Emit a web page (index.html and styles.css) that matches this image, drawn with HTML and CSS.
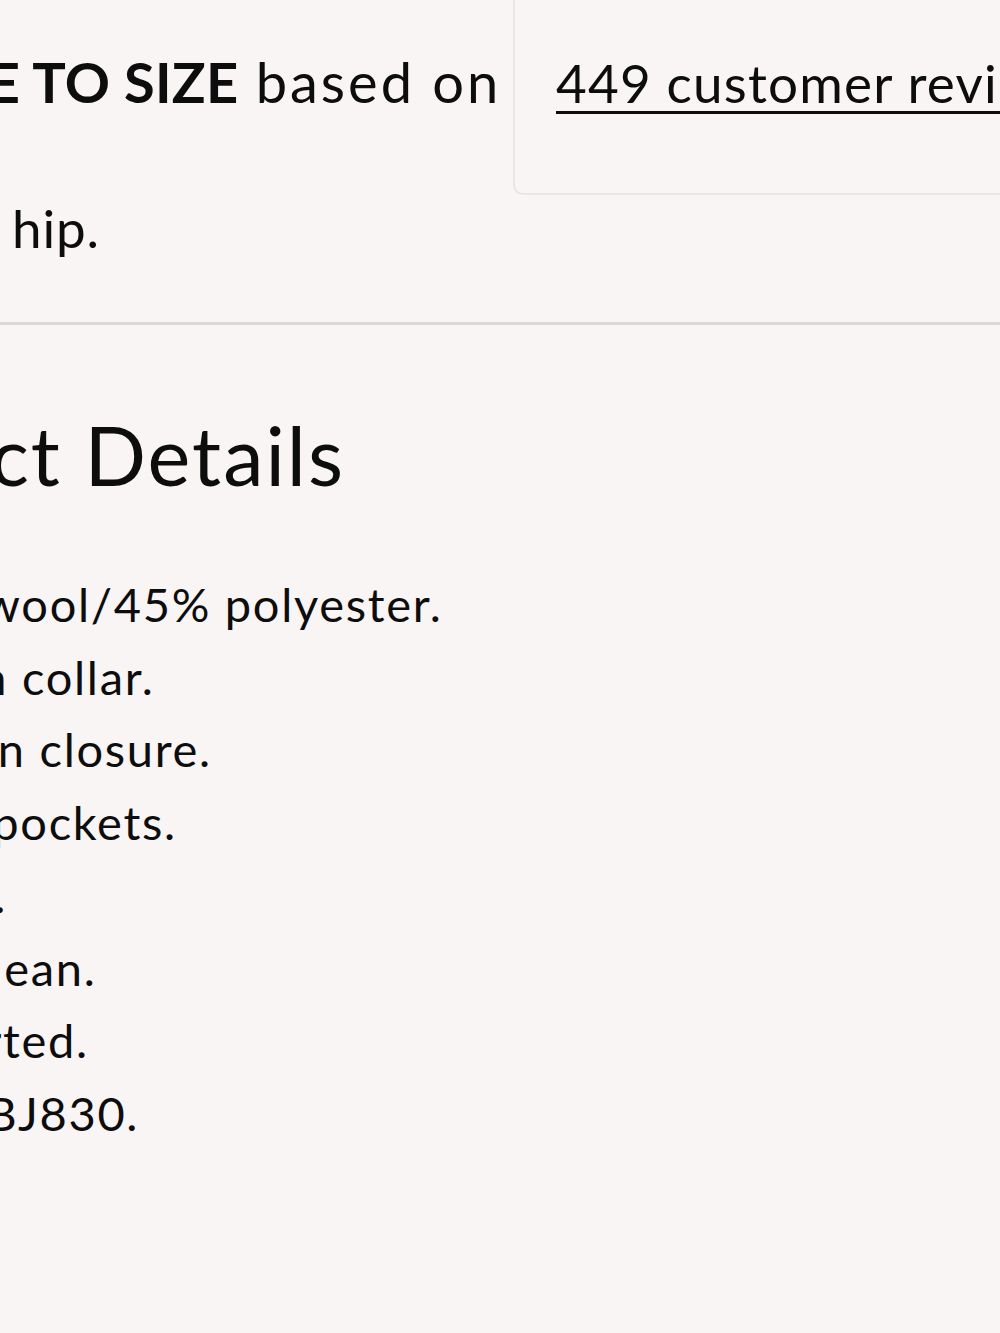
FILE: index.html
```html
<!DOCTYPE html>
<html lang="en">
<head>
<meta charset="utf-8">
<title>Product Details</title>
<link rel="stylesheet" href="styles.css">
</head>
<body>
<main class="page">
  <section class="fit">
    <div class="fit-row">
      <p class="fit-text">Fit: <strong>TRUE TO SIZE</strong> based on</p>
      <div class="review-box">
        <a class="review-link" href="#">449 customer reviews</a>
      </div>
    </div>
    <p class="fit-note">Hits below hip.</p>
  </section>
  <section class="details">
    <h2 class="details-title">Product Details</h2>
    <ul class="details-list">
      <li>55% wool/45% polyester.</li>
      <li>Notch collar.</li>
      <li>Button closure.</li>
      <li>Welt pockets.</li>
      <li>Lined.</li>
      <li>Dry clean.</li>
      <li>Imported.</li>
      <li>Item BJ830.</li>
    </ul>
  </section>
</main>
</body>
</html>
```

FILE: styles.css
```css
html, body {
  margin: 0;
  padding: 0;
  background: #f9f5f4;
}
body {
  width: 1000px;
  height: 1333px;
  overflow: hidden;
  font-family: Lato, "Open Sans", sans-serif;
  color: #0d0d0d;
}
.page {
  margin-left: -232px;
  width: 1500px;
}
.fit-row {
  display: flex;
  align-items: flex-start;
  margin-top: -20px;
}
.fit-text {
  margin: 0;
  width: 745px;
  flex: none;
  white-space: nowrap;
  padding-top: 70px;
  font-size: 56px;
  letter-spacing: 3px;
  line-height: 64px;
}
.fit-text strong {
  font-weight: 700;
  letter-spacing: 0.2px;
}
.review-box {
  flex: none;
  width: 700px;
  height: 215px;
  border: 2px solid #eae6e4;
  border-radius: 10px;
  padding: 69px 0 0 41px;
  box-sizing: border-box;
}
.review-link {
  color: #0d0d0d;
  font-size: 53px;
  letter-spacing: 1.2px;
  line-height: 64px;
  text-decoration: underline;
  text-decoration-thickness: 3px;
  text-underline-offset: 8px;
  white-space: nowrap;
}
.fit-note {
  margin: 1px 0 0 -27px;
  font-size: 53px;
  letter-spacing: 0.8px;
  line-height: 64px;
}
.details {
  border-top: 3px solid #dcd8d7;
  margin-top: 62px;
}
.details-title {
  margin: 85px 0 0;
  font-size: 81px;
  letter-spacing: 2px;
  font-weight: 400;
  line-height: 90px;
}
.details-list {
  list-style: none;
  margin: 68px 0 0;
  padding: 0 0 0 105px;
  font-size: 47px;
  letter-spacing: 1.7px;
  line-height: 72.7px;
}
```
